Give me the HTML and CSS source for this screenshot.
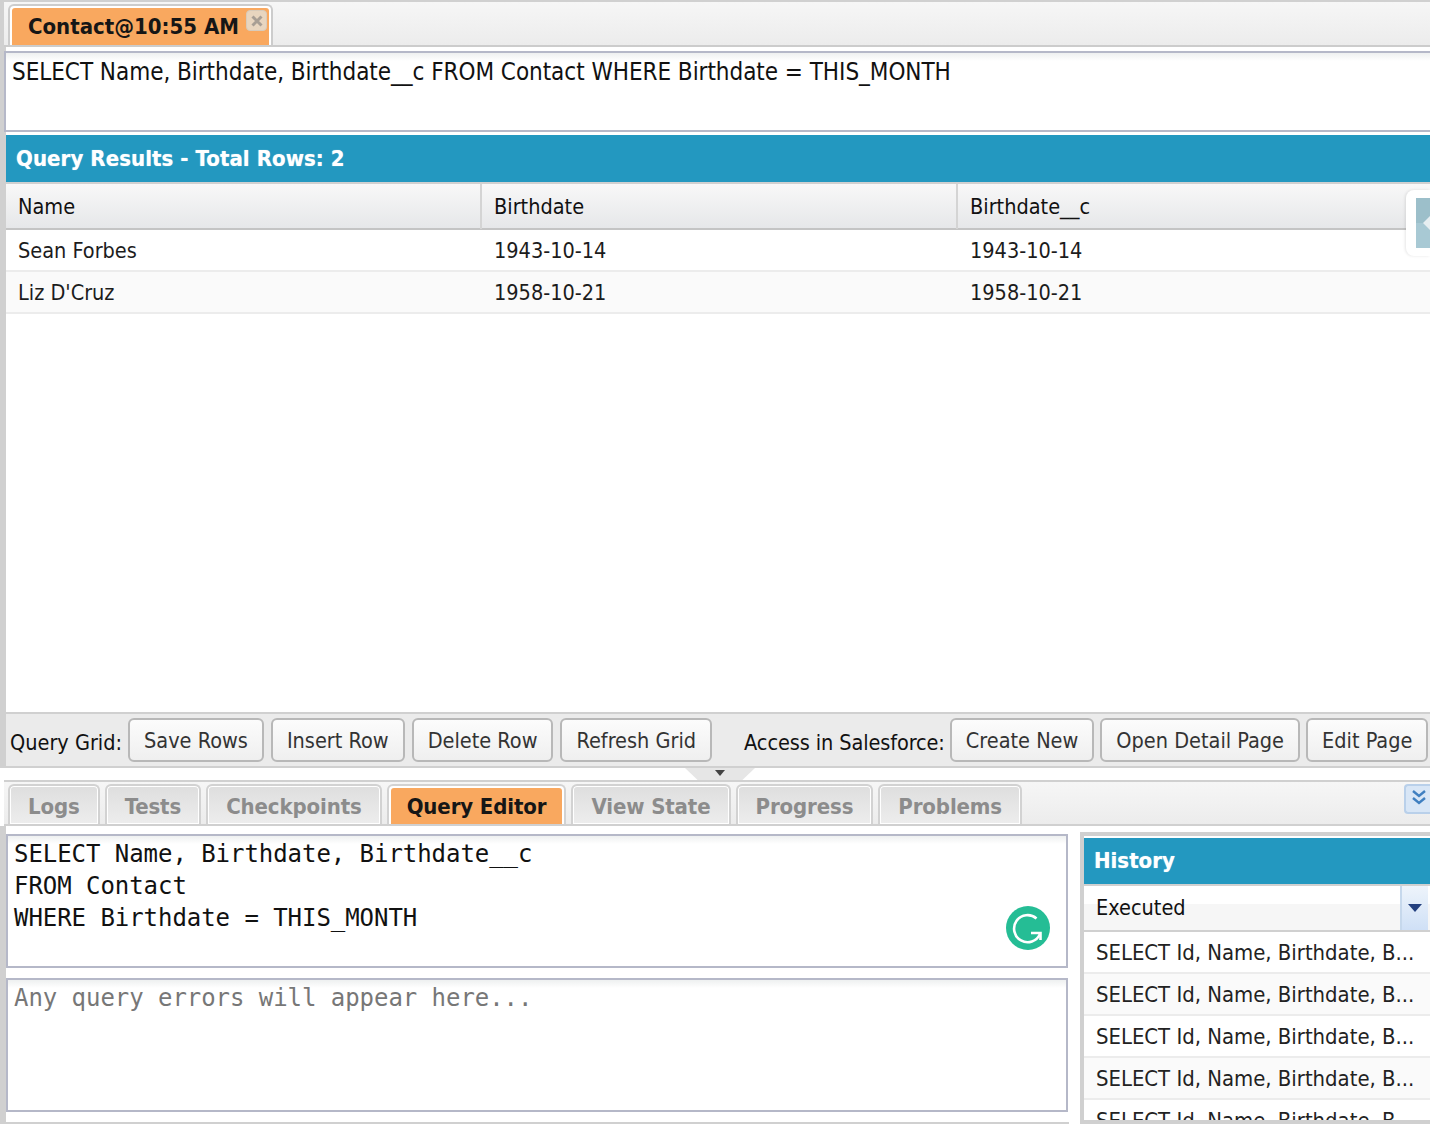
FILE: index.html
```html
<!DOCTYPE html>
<html lang="en">
<head>
<meta charset="utf-8">
<title>Query Editor</title>
<link rel="stylesheet" href="styles.css">
</head>
<body>
<div class="app">
  <section class="top">
    <div class="doc-tabs">
      <div class="doc-tab">
        <span class="doc-tab-fill">Contact@10:55 AM
          <span class="tab-close"><svg width="16" height="16" viewBox="0 0 16 16"><path d="M3.5 3.5l9 9M12.5 3.5l-9 9" stroke="#a89e94" stroke-width="3"/></svg></span>
        </span>
      </div>
    </div>
    <div class="sql-box">SELECT Name, Birthdate, Birthdate__c FROM Contact WHERE Birthdate = THIS_MONTH</div>
    <div class="section-head results-head">Query Results - Total Rows: 2</div>
    <div class="grid">
      <div class="grid-row grid-header"><div class="cell">Name</div><div class="cell">Birthdate</div><div class="cell">Birthdate__c</div></div>
      <div class="grid-row"><div class="cell">Sean Forbes</div><div class="cell">1943-10-14</div><div class="cell">1943-10-14</div></div>
      <div class="grid-row alt"><div class="cell">Liz D'Cruz</div><div class="cell">1958-10-21</div><div class="cell">1958-10-21</div></div>
      <div class="side-handle"><div class="side-handle-inner"><svg width="14" height="50" viewBox="0 0 14 50"><path d="M14 18L7 25l7 7z" fill="#e6eef1"/></svg></div></div>
    </div>
    <div class="toolbar">
      <span class="tool-label">Query Grid:</span>
      <button class="btn btn-first">Save Rows</button>
      <button class="btn">Insert Row</button>
      <button class="btn">Delete Row</button>
      <button class="btn">Refresh Grid</button>
      <span class="tool-label tool-label-right">Access in Salesforce:</span>
      <button class="btn btn-tight">Create New</button>
      <button class="btn btn-first">Open Detail Page</button>
      <button class="btn btn-first">Edit Page</button>
    </div>
  </section>
  <div class="splitter">
    <div class="splitter-knob"><svg width="12" height="6" viewBox="0 0 12 6"><path d="M1 0h10L6 6z" fill="#444"/></svg></div>
  </div>
  <section class="bottom">
    <div class="bottom-tabs">
      <div class="tab">Logs</div>
      <div class="tab">Tests</div>
      <div class="tab">Checkpoints</div>
      <div class="tab active"><span>Query Editor</span></div>
      <div class="tab">View State</div>
      <div class="tab">Progress</div>
      <div class="tab">Problems</div>
      <div class="collapse"><svg width="18" height="18" viewBox="0 0 18 18"><path d="M3 2l6 5 6-5M3 9l6 5 6-5" fill="none" stroke="#3f7fc0" stroke-width="2.4"/></svg></div>
    </div>
    <div class="work">
      <div class="editors">
        <div class="code-box editor">SELECT Name, Birthdate, Birthdate__c
FROM Contact
WHERE Birthdate = THIS_MONTH<span class="grammarly"><svg width="44" height="44" viewBox="0 0 44 44"><circle cx="22" cy="22" r="22" fill="#25bd95"/><path d="M30.5 12.5A13.5 13.5 0 1 0 34 28" fill="none" stroke="#fff" stroke-width="2.6"/><path d="M25 27h9.500v7" fill="none" stroke="#fff" stroke-width="2.6"/></svg></span></div>
        <div class="code-box errors">Any query errors will appear here...</div>
      </div>
      <aside class="history">
        <div class="section-head history-head">History</div>
        <div class="combo">
          <div class="combo-text">Executed</div>
          <div class="combo-arrow"><svg width="14" height="8" viewBox="0 0 14 8"><path d="M0 0h14L7 8z" fill="#23407f"/></svg></div>
        </div>
        <div class="hist-row">SELECT Id, Name, Birthdate, B...</div>
        <div class="hist-row alt">SELECT Id, Name, Birthdate, B...</div>
        <div class="hist-row">SELECT Id, Name, Birthdate, B...</div>
        <div class="hist-row alt">SELECT Id, Name, Birthdate, B...</div>
        <div class="hist-row">SELECT Id, Name, Birthdate, B...</div>
      </aside>
    </div>
  </section>
</div>
</body>
</html>
```
FILE: styles.css
```css
* { box-sizing: border-box; }
html, body { margin: 0; padding: 0; }
body {
  width: 1430px;
  height: 1124px;
  overflow: hidden;
  background: #fff;
  font-family: "DejaVu Sans Condensed", "DejaVu Sans", sans-serif;
  font-stretch: condensed;
  font-size: 21.5px;
  color: #111;
}
.app { display: flex; flex-direction: column; height: 1124px; }

.top {
  height: 768px;
  flex: none;
  display: flex;
  flex-direction: column;
  background: #fff;
  border-top: 2px solid #d0d0d0;
  border-left: 6px solid #d0d0d0;
}

.doc-tabs {
  height: 45px;
  flex: none;
  background: linear-gradient(#f6f6f6, #ececec);
  border-bottom: 2px solid #ccc;
  padding: 2px 0 0 4px;
  margin-left: -2px;
}
.doc-tab {
  width: 265px;
  height: 41px;
  border: 2px solid #ccc;
  border-bottom: 0;
  border-radius: 6px 6px 0 0;
  background: #fff;
  padding: 2px 2px 0;
}
.doc-tab-fill {
  display: flex;
  height: 37px;
  align-items: center;
  position: relative;
  background: #f9a85f;
  border-radius: 3px 3px 0 0;
  padding: 0 0 0 16px;
  font-size: 22px;
  font-weight: 700;
  color: #161616;
  white-space: nowrap;
}
.tab-close {
  position: absolute;
  right: 2px;
  top: 2px;
  width: 21px;
  height: 21px;
  background: #e8d5bf;
  border: 1px solid #d8cbbb;
  border-radius: 4px;
  display: flex;
  align-items: center;
  justify-content: center;
}

.sql-box {
  height: 81px;
  flex: none;
  margin-top: 4px;
  border: 2px solid #b5b8c8;
  border-right: 0;
  padding: 2px 0 0 6px;
  font-size: 24px;
  letter-spacing: -0.04px;
  line-height: 34px;
  background: linear-gradient(#eef0f0, #fff 8px);
  margin-left: -2px;
  white-space: nowrap;
}

.section-head {
  flex: none;
  height: 46px;
  background: #2398c0;
  color: #fff;
  font-size: 22px;
  font-weight: 700;
  line-height: 46px;
  padding-left: 10px;
  text-shadow: 0 0 1px rgba(255, 255, 255, .6);
}
.results-head { margin-top: 3px; height: 47px; line-height: 48px; letter-spacing: 0.07px; }

.grid { flex: 1; position: relative; }
.grid-row {
  display: grid;
  grid-template-columns: 476px 476px 1fr;
  height: 42px;
  border-bottom: 2px solid #ececec;
}
.grid-header {
  height: 48px;
  border-top: 2px solid #d0d0d0;
  border-bottom: 2px solid #c4c4c4;
  background: linear-gradient(#f8f8f8, #e6e7e9);
}
.cell {
  padding-left: 12px;
  line-height: 41px;
  white-space: nowrap;
  color: #1c1c1c;
}
.grid-header .cell { border-right: 2px solid #d4d4d4; line-height: 45px; color: #111; }
.grid-header .cell:last-child { border-right: 0; }
.alt { background: #fafafa; }

.side-handle {
  position: absolute;
  right: 0;
  top: 8px;
  width: 24px;
  height: 66px;
  background: #fff;
  border-radius: 8px 0 0 8px;
  box-shadow: -1px 0 3px rgba(0,0,0,.1);
  padding: 8px 0 0 10px;
}
.side-handle-inner { height: 50px; background: linear-gradient(#9cbfca 50%, #a8c9d4 50%); }
.side-handle-inner svg { display: block; }

.toolbar {
  height: 56px;
  flex: none;
  display: flex;
  align-items: center;
  gap: 7px;
  background: #ebebeb;
  border-top: 2px solid #d0d0d0;
  border-bottom: 2px solid #d0d0d0;
  padding: 0 0 0 4px;
}
.tool-label { line-height: 44px; margin-top: 6px; white-space: nowrap; color: #111; }
.tool-label-right { margin-left: 25px; letter-spacing: -0.1px; }
.btn {
  height: 44px;
  padding: 0 14px;
  border: 2px solid #b8b8b8;
  border-radius: 6px;
  background: linear-gradient(#fcfcfc, #efefef);
  font: inherit;
  color: #333;
  white-space: nowrap;
}
.btn-first { margin-left: -1px; }
.btn-tight { margin-left: -2px; }

.splitter { height: 12px; flex: none; display: flex; justify-content: center; background: #fff; }
.splitter-knob {
  width: 70px;
  height: 12px;
  background: #e6e6e6;
  clip-path: polygon(0 0, 100% 0, 82% 100%, 18% 100%);
  display: flex;
  justify-content: center;
  padding-top: 2px;
  margin-left: 10px;
}
.splitter-knob svg { display: block; }

.bottom {
  flex: 1;
  min-height: 0;
  display: flex;
  flex-direction: column;
}
.bottom-tabs {
  position: relative;
  height: 46px;
  flex: none;
  display: flex;
  gap: 5px;
  padding: 2px 0 0 4px;
  border-top: 2px solid #d0d0d0;
  border-bottom: 2px solid #d0d0d0;
  background: linear-gradient(#f6f6f6, #ececec);
  margin-left: 4px;
}
.tab {
  height: 40px;
  padding: 0 18px;
  border: 2px solid #d2d2d2;
  border-bottom: 0;
  border-radius: 6px 6px 0 0;
  background: linear-gradient(#dedede, #ededed);
  box-shadow: inset 0 0 0 1px #fff;
  color: #8c8c8c;
  font-size: 22px;
  font-weight: 700;
  letter-spacing: -0.12px;
  line-height: 42px;
  white-space: nowrap;
}
.tab.active {
  background: #fff;
  box-shadow: none;
  padding: 2px 2px 0;
  color: #161616;
  line-height: 38px;
}
.tab.active span { display: block; height: 36px; background: #f9a85f; padding: 0 16px; border-radius: 3px 3px 0 0; }
.collapse {
  position: absolute;
  right: 0;
  top: 2px;
  width: 26px;
  height: 30px;
  background: #d8e6f6;
  border: 2px solid #b9d0ea;
  border-right: 0;
  border-radius: 4px 0 0 4px;
  padding: 3px 0 0 4px;
}
.collapse svg { display: block; }

.work { flex: 1; min-height: 0; display: flex; overflow: hidden; }
.editors {
  width: 1069px;
  flex: none;
  padding: 8px 1px 0 0;
  border-left: 6px solid #d0d0d0;
  border-bottom: 2px solid #d0d0d0;
  display: flex;
  flex-direction: column;
  gap: 10px;
}
.code-box {
  height: 134px;
  flex: none;
  border: 2px solid #b5b8c8;
  padding: 2px 6px;
  font-family: "DejaVu Sans Mono", monospace;
  font-stretch: normal;
  font-size: 24px;
  letter-spacing: -0.05px;
  line-height: 32px;
  white-space: pre;
  background: linear-gradient(#eef0f0, #fff 8px);
  position: relative;
  color: #111;
}
.errors { color: #777; }
.grammarly { position: absolute; right: 16px; top: 70px; width: 44px; height: 44px; }
.grammarly svg { display: block; }

.history {
  flex: 1;
  margin-left: 11px;
  border-left: 4px solid #d0d0d0;
  border-top: 4px solid #d0d0d0;
  border-bottom: 4px solid #d0d0d0;
  margin-top: 6px;
  background: #fff;
  overflow: hidden;
  padding-top: 2px;
}
.history-head { height: 46px; }
.combo {
  display: flex;
  height: 48px;
  border-top: 2px solid #d0d0d0;
  border-bottom: 2px solid #d0d0d0;
  background: linear-gradient(#fff 40%, #f6f6f6 40%);
  padding-right: 2px;
}
.combo-text { flex: 1; padding-left: 12px; line-height: 44px; }
.combo-arrow {
  width: 28px;
  background: linear-gradient(#eef4fb, #cfe0f6);
  border-left: 2px solid #c6d8ec;
  display: flex;
  align-items: center;
  justify-content: center;
}
.hist-row {
  height: 42px;
  border-bottom: 2px solid #ececec;
  padding-left: 12px;
  font-size: 21.9px;
  line-height: 41px;
  white-space: nowrap;
  color: #222;
}
```
